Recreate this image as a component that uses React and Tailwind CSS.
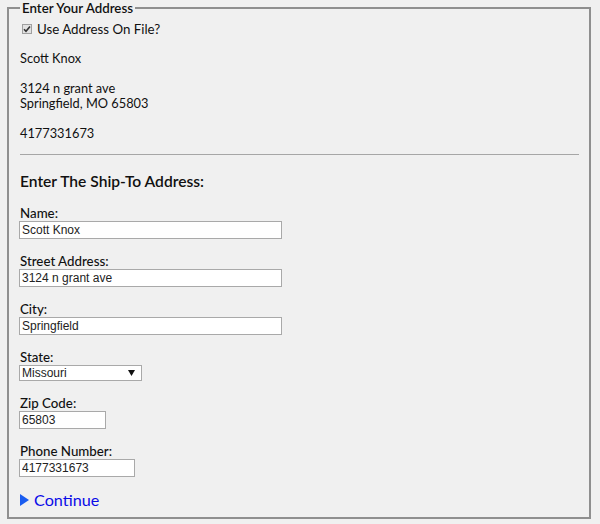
import { useState } from 'react';

const fields = [
  { label: 'Name:', value: 'Scott Knox', w: 'w-[263px]' },
  { label: 'Street Address:', value: '3124 n grant ave', w: 'w-[263px]' },
  { label: 'City:', value: 'Springfield', w: 'w-[263px]' },
];

function Field({ label, value, w }) {
  return (
    <div className="mt-[14px] first:mt-[13px]">
      <div className="text-[13.3px] leading-[16px] text-[#111] font-medium">{label}</div>
      <input
        defaultValue={value}
        className={`${w} h-[18px] -ml-px block bg-white border border-[#a9a9a9] px-[2px] text-[12px] text-[#222] outline-none`}
        style={{ fontFamily: 'Arial, "Liberation Sans", sans-serif' }}
      />
    </div>
  );
}

export default function App() {
  const [useFile, setUseFile] = useState(true);

  return (
    <div className="w-[600px] h-[524px] bg-[#f0f0f0] pt-0 font-['Lato',sans-serif]">
      <fieldset className="mx-[7px] w-[584px] h-[519px] border-2 border-[#8f8f8f] pl-[11px] pr-[10px] pt-[5px] pb-[6px]">
        <legend className="px-[2px] text-[13.3px] leading-[16px] font-semibold text-[#111]">Enter Your Address</legend>

        {/* address on file */}
        <label className="flex items-center gap-[5px] pl-[2px] text-[13.3px] leading-[16px] text-[#111]">
          <span
            onClick={() => setUseFile(!useFile)}
            className="w-[10px] h-[10px] border border-[#a0a0a0] bg-[#e2e2e2] flex items-center justify-center"
          >
            {useFile && (
              <svg width="8" height="8" viewBox="0 0 8 8">
                <path d="M1 4.2 L3 6.3 L7 1.5" fill="none" stroke="#333" strokeWidth="1.6" />
              </svg>
            )}
          </span>
          Use Address On File?
        </label>

        <div className="text-[12.8px] leading-[15px] text-[#111]">
          <p className="mt-[14px]">Scott Knox</p>
          <p className="mt-[15px]">3124 n grant ave</p>
          <p>Springfield, MO 65803</p>
          <p className="mt-[15px]">4177331673</p>
        </div>

        <hr className="mt-[13px] border-t border-[#a6a6a6]" />

        <h2 className="mt-[16px] text-[15.6px] leading-[20px] font-semibold text-[#111]">Enter The Ship-To Address:</h2>

        {fields.map((f) => (
          <Field key={f.label} {...f} />
        ))}

        {/* state */}
        <div className="mt-[14px]">
          <div className="text-[13.3px] leading-[16px] text-[#111] font-medium">State:</div>
          <div className="w-[123px] h-[16px] -ml-px flex items-center justify-between bg-white border border-[#a9a9a9] pl-[2px] pr-[6px] text-[12px] text-[#222] font-['Arial','Liberation_Sans',sans-serif]">
            <span>Missouri</span>
            <svg width="7" height="6" viewBox="0 0 7 6">
              <path d="M0 0 H7 L3.5 6 Z" fill="#111" />
            </svg>
          </div>
        </div>

        <Field label="Zip Code:" value="65803" w="w-[87px]" />
        <Field label="Phone Number:" value="4177331673" w="w-[116px]" />

        <a href="#" className="mt-[12px] flex items-center gap-[5px] text-[16.2px] leading-[22px] text-[#0a0ae8]">
          <svg width="9" height="12" viewBox="0 0 9 12">
            <path d="M0 0 L9 6 L0 12 Z" fill="#1a5cf0" />
          </svg>
          Continue
        </a>
      </fieldset>
    </div>
  );
}
